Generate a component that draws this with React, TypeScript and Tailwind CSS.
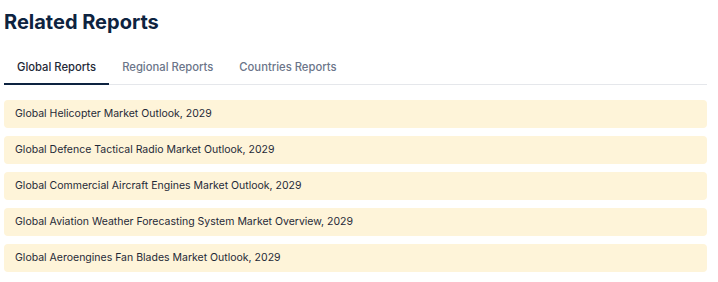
import React, { useState } from 'react';

const tabs = ['Global Reports', 'Regional Reports', 'Countries Reports'];

const reports = [
  'Global Helicopter Market Outlook, 2029',
  'Global Defence Tactical Radio Market Outlook, 2029',
  'Global Commercial Aircraft Engines Market Outlook, 2029',
  'Global Aviation Weather Forecasting System Market Overview, 2029',
  'Global Aeroengines Fan Blades Market Outlook, 2029',
];

const App: React.FC = () => {
  const [active, setActive] = useState(0);

  return (
    <div className="w-[718px] h-[282px] bg-white font-['Inter',sans-serif] pl-1 pr-[11px] pt-[11px]">
      <h2 className="text-[20px] leading-[22px] font-bold text-[#0d2340]">Related Reports</h2>

      <div className="mt-[26px] flex border-b border-[#e5e7eb]">
        {tabs.map((t, i) => (
          <button
            key={t}
            onClick={() => setActive(i)}
            className={`px-[13px] pb-[8px] text-[11.25px] leading-[16px] font-medium -mb-px border-b-2 ${
              active === i ? 'border-[#0d2340] text-[#1f2937]' : 'border-transparent text-[#6b7589]'
            }`}
          >
            {t}
          </button>
        ))}
      </div>

      <div className="mt-[15px] flex flex-col gap-2">
        {reports.map((r) => (
          <div key={r} className="h-[28px] flex items-center px-[11px] rounded bg-[#fef4d9] text-[10.5px] text-[#1f2937]">
            {r}
          </div>
        ))}
      </div>
    </div>
  );
};

export default App;
